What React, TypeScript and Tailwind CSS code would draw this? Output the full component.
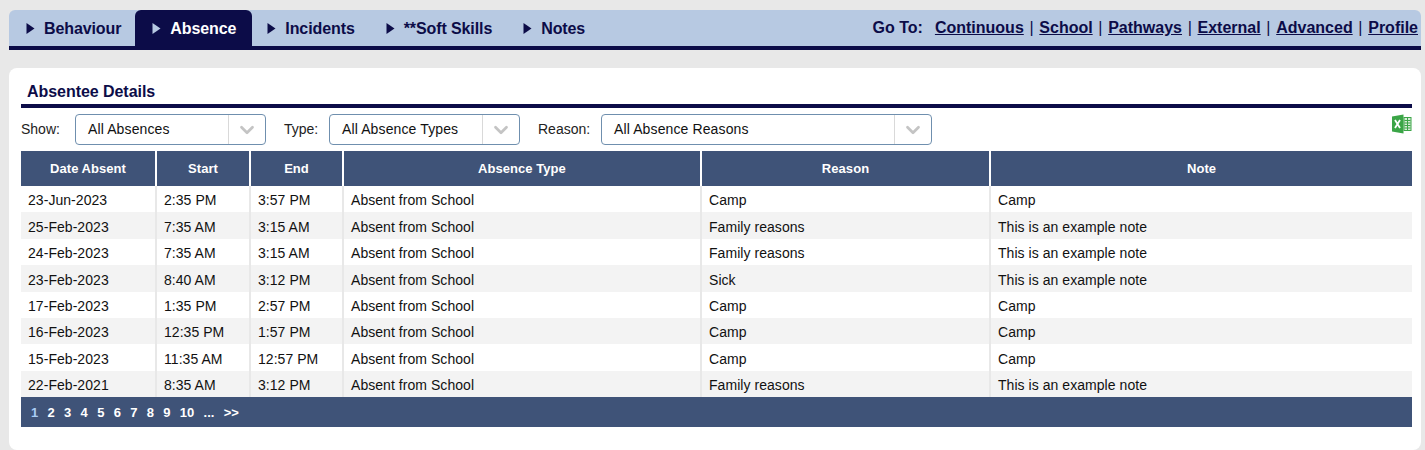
import React from 'react';
import { ChevronDown } from 'lucide-react';

const tabs = ['Behaviour', 'Absence', 'Incidents', '**Soft Skills', 'Notes'];
const links = ['Continuous', 'School', 'Pathways', 'External', 'Advanced', 'Profile'];
const pages = ['1', '2', '3', '4', '5', '6', '7', '8', '9', '10', '...', '>>'];

const columns = [
    { title: 'Date Absent', width: 'w-[136px]' },
    { title: 'Start', width: 'w-[94px]' },
    { title: 'End', width: 'w-[93px]' },
    { title: 'Absence Type', width: 'w-[358px]' },
    { title: 'Reason', width: 'w-[289px]' },
    { title: 'Note', width: 'w-[421px]' },
];

const note = 'This is an example note';
const rows = [
    ['23-Jun-2023', '2:35 PM', '3:57 PM', 'Absent from School', 'Camp', 'Camp'],
    ['25-Feb-2023', '7:35 AM', '3:15 AM', 'Absent from School', 'Family reasons', note],
    ['24-Feb-2023', '7:35 AM', '3:15 AM', 'Absent from School', 'Family reasons', note],
    ['23-Feb-2023', '8:40 AM', '3:12 PM', 'Absent from School', 'Sick', note],
    ['17-Feb-2023', '1:35 PM', '2:57 PM', 'Absent from School', 'Camp', 'Camp'],
    ['16-Feb-2023', '12:35 PM', '1:57 PM', 'Absent from School', 'Camp', 'Camp'],
    ['15-Feb-2023', '11:35 AM', '12:57 PM', 'Absent from School', 'Camp', 'Camp'],
    ['22-Feb-2021', '8:35 AM', '3:12 PM', 'Absent from School', 'Family reasons', note],
];

const FakeSelect = ({ label, width }: { label: string; width: string }) => (
    <div className={`${width} h-[31px] flex items-center border border-[#6f8fae] rounded-[4px] bg-white`}>
        <span className="flex-1 pl-3 text-[14px] tracking-[0.12px] text-[#111]">{label}</span>
        <span className="w-[37px] h-full flex items-center justify-center border-l border-[#d9d9d9]">
            <ChevronDown size={22} strokeWidth={3} className="text-[#c4c4c4]" />
        </span>
    </div>
);

const ExcelIcon = () => (
    <svg width="20" height="20" viewBox="0 0 20 20">
        <path d="M0 2.5 L11.5 0.5 V19.5 L0 17.5 Z" fill="#3ba547" />
        <rect x="11.5" y="3" width="8" height="14" fill="#3ba547" />
        <rect x="12.5" y="4" width="6" height="12" fill="#d8ecd8" />
        <path d="M12.5 6.5 H18.5 M12.5 9 H18.5 M12.5 11.5 H18.5 M12.5 14 H18.5 M15.5 4 V16" stroke="#3ba547" strokeWidth="1" />
        <path d="M3 6 L8 14 M8 6 L3 14" stroke="#fff" strokeWidth="1.8" />
    </svg>
);

const Triangle = ({ className }: { className: string }) => (
    <svg width="9" height="11" viewBox="0 0 9 11" className={className}>
        <path d="M0.5 0 L8.5 5.5 L0.5 11 Z" fill="currentColor" />
    </svg>
);

export default function App() {
    return (
        <div className="h-[450px] overflow-hidden bg-[#e8e8e8] pt-[10px] pl-[9px] pr-[4px] font-['Liberation_Sans',Arial,sans-serif]">
            <div className="h-[40px] flex items-stretch justify-between bg-[#b7c9e2] border-b-4 border-[#0c0c48] rounded-t-[6px]">
                <div className="flex">
                    {tabs.map((tab) => {
                        const active = tab === 'Absence';
                        return (
                            <div
                                key={tab}
                                className={`flex items-center pt-[1px] pl-[17px] gap-[9px] text-[16px] tracking-[-0.1px] font-bold rounded-t-[6px] ${active ? 'bg-[#0c0c48] text-white pr-[16px] -mr-[2px]' : 'text-[#0c0c48] pr-[14px]'}`}
                            >
                                <Triangle className={active ? 'text-[#b7c9e2]' : 'text-[#0c0c48]'} />
                                {tab}
                            </div>
                        );
                    })}
                </div>
                <div className="flex items-center pr-[3px] text-[16px] font-bold text-[#0c0c48]">
                    <span className="mr-[12px]">Go To:</span>
                    {links.map((link, i) => (
                        <span key={link}>
                            <a className="underline">{link}</a>
                            {i < links.length - 1 && <span className="font-normal mx-[5.7px]">|</span>}
                        </span>
                    ))}
                </div>
            </div>

            <div className="mt-[18px] h-[382px] bg-white rounded-[8px] pt-[12px] pl-[12px] pr-[9px]">
                <h2 className="h-[28px] pl-[6px] border-b-4 border-[#0c0c48] text-[16px] leading-[23px] tracking-[-0.05px] font-bold text-[#0c0c48]">
                    Absentee Details
                </h2>
                <div className="h-[43px] pt-[6px] flex items-start text-[14px] text-[#222]">
                    <span className="w-[54px] h-[31px] flex items-center">Show:</span>
                    <FakeSelect label="All Absences" width="w-[191px]" />
                    <span className="ml-[18px] w-[45px] h-[31px] flex items-center">Type:</span>
                    <FakeSelect label="All Absence Types" width="w-[191px]" />
                    <span className="ml-[18px] w-[63px] h-[31px] flex items-center">Reason:</span>
                    <FakeSelect label="All Absence Reasons" width="w-[331px]" />
                    <span className="ml-auto"><ExcelIcon /></span>
                </div>

                <div className="w-[1391px] text-[14px] tracking-[0.05px] text-[#111]">
                    <div className="flex h-[35px] bg-[#3f5378] text-white">
                        {columns.map((col, i) => (
                            <div
                                key={col.title}
                                className={`${col.width} flex items-center justify-center text-[13px] tracking-[0.05px] font-bold ${i < columns.length - 1 ? 'border-r-2 border-white' : ''}`}
                            >
                                {col.title}
                            </div>
                        ))}
                    </div>
                    {rows.map((row, r) => (
                        <div key={r} className={`flex h-[26.375px] ${r % 2 ? 'bg-[#f3f3f3]' : 'bg-white'}`}>
                            {row.map((cell, c) => (
                                <div
                                    key={c}
                                    className={`${columns[c].width} pt-[4.4px] pl-[7px] leading-[20px] ${c < row.length - 1 ? 'border-r-2 border-[#e8e8e8]' : ''}`}
                                >
                                    {cell}
                                </div>
                            ))}
                        </div>
                    ))}
                </div>

                <div className="h-[30px] flex items-center pt-[1px] pl-[10px] bg-[#3f5378] text-[13px] font-bold text-white">
                    {pages.map((page, i) => (
                        <span key={page} className={`mr-[9.3px] ${i === 0 ? 'text-[#a9cdf5]' : ''}`}>
                            {page}
                        </span>
                    ))}
                </div>
            </div>
        </div>
    );
}
